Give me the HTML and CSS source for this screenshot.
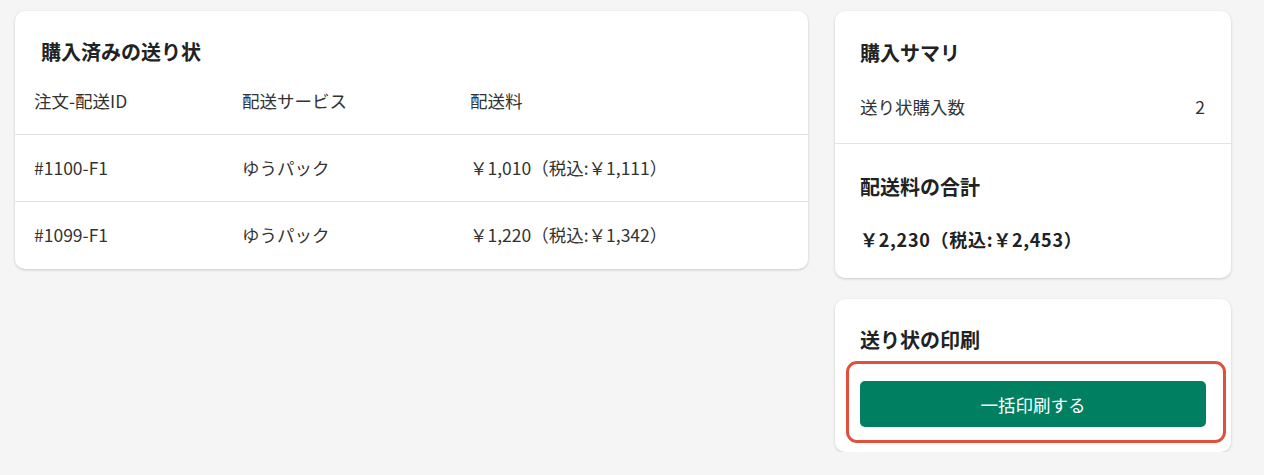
FILE: index.html
```html
<!DOCTYPE html>
<html lang="ja">
<head>
    <meta charset="UTF-8">
    <meta name="viewport" content="width=device-width, initial-scale=1.0">
    <title>送り状</title>
    <link rel="stylesheet" href="styles.css">
</head>
<body>
    <div class="layout">
        <div class="card labels">
            <h2 class="card-title">購入済みの送り状</h2>
            <table class="label-table">
                <thead>
                    <tr>
                        <th class="col-id">注文-配送ID</th>
                        <th class="col-service">配送サービス</th>
                        <th>配送料</th>
                    </tr>
                </thead>
                <tbody>
                    <tr>
                        <td>#1100-F1</td>
                        <td>ゆうパック</td>
                        <td>￥1,010（税込:￥1,111）</td>
                    </tr>
                    <tr>
                        <td>#1099-F1</td>
                        <td>ゆうパック</td>
                        <td>￥1,220（税込:￥1,342）</td>
                    </tr>
                </tbody>
            </table>
        </div>

        <div class="side">
            <div class="card">
                <div class="section first">
                    <h2 class="card-title">購入サマリ</h2>
                    <div class="summary-row">
                        <span>送り状購入数</span>
                        <span>2</span>
                    </div>
                </div>
                <div class="section second">
                    <h2 class="card-title">配送料の合計</h2>
                    <div class="total">￥2,230（税込:￥2,453）</div>
                </div>
            </div>

            <div class="card print">
                <h2 class="card-title">送り状の印刷</h2>
                <div class="highlight">
                    <button class="btn-primary">一括印刷する</button>
                </div>
            </div>
        </div>
    </div>
</body>
</html>
```

FILE: styles.css
```css
body {
    margin: 0;
    padding: 11px 33px 0 15px;
    background: #f5f5f5;
    font-family: "Noto Sans CJK JP", "Noto Sans", sans-serif;
    font-size: 17.5px;
    color: #333;
}
.layout {
    display: grid;
    grid-template-columns: 1fr 396px;
    gap: 27px;
    align-items: start;
}
.card {
    background: #fff;
    border-radius: 10px;
    box-shadow: 0 1px 3px rgba(0, 0, 0, 0.18);
}
.card-title {
    margin: 0;
    font-size: 20px;
    line-height: 30px;
    font-weight: 700;
    color: #202223;
}
.labels {
    padding-top: 26px;
    padding-bottom: 1px;
    overflow: hidden;
}
.labels .card-title {
    padding: 0 26px;
}
.label-table {
    width: 100%;
    border-collapse: collapse;
    margin-top: 1px;
}
.label-table th,
.label-table td {
    text-align: left;
    font-weight: 400;
    padding: 20px 19px 20px 19px;
    line-height: 26px;
    border-bottom: 1px solid #e3e3e3;
    white-space: nowrap;
}
.label-table tbody tr:last-child td {
    border-bottom: none;
}
.col-id {
    width: 170px;
}
.col-service {
    width: 190px;
}
.side {
    display: flex;
    flex-direction: column;
    gap: 21px;
}
.section {
    padding: 0 26px 0 25px;
}
.section.first {
    padding-top: 27px;
    padding-bottom: 24px;
    border-bottom: 1px solid #e3e3e3;
}
.section.second {
    padding-top: 28px;
    padding-bottom: 24px;
}
.summary-row {
    display: flex;
    justify-content: space-between;
    margin-top: 26px;
    line-height: 25px;
}
.total {
    margin-top: 22px;
    font-weight: 700;
    font-size: 18px;
    letter-spacing: 0.7px;
    line-height: 30px;
    color: #202223;
}
.print {
    padding: 26px 25px 25px 25px;
}
.highlight {
    position: relative;
    margin-top: 26px;
}
.highlight::after {
    content: "";
    position: absolute;
    top: -20px;
    left: -14px;
    right: -20px;
    bottom: -16px;
    border: 3px solid #e0503d;
    border-radius: 11px;
    pointer-events: none;
}
.btn-primary {
    display: block;
    width: 100%;
    height: 46px;
    border: none;
    border-radius: 5px;
    background: #008060;
    color: #fff;
    font-family: inherit;
    font-size: 17.5px;
    cursor: pointer;
}
.btn-primary:hover {
    background: #006e52;
}
```
